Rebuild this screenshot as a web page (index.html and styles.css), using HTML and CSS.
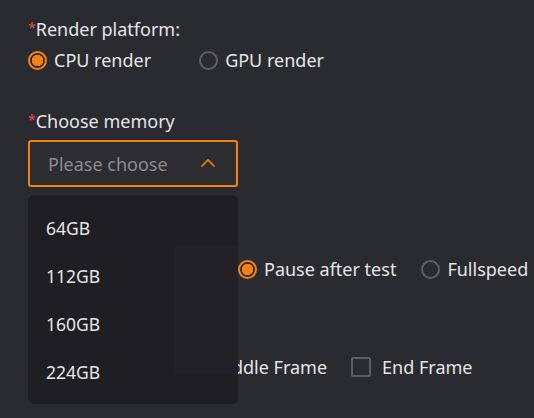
FILE: index.html
```html
<!DOCTYPE html>
<html lang="en">
<head>
  <meta charset="UTF-8" />
  <meta name="viewport" content="width=device-width, initial-scale=1.0" />
  <title>Render settings</title>
  <link rel="stylesheet" href="styles.css">
</head>
<body>
  <div class="form">
    <!-- render platform -->
    <div class="field">
      <div class="label"><span class="req">*</span>Render platform:</div>
      <div class="radios wide">
        <label class="radio checked"><span class="dot"></span>CPU render</label>
        <label class="radio"><span class="dot"></span>GPU render</label>
      </div>
    </div>

    <!-- memory select -->
    <div class="field memory">
      <div class="label"><span class="req">*</span>Choose memory</div>
      <div class="select-wrap">
        <div class="select">
          <span class="placeholder">Please choose</span>
          <svg class="arrow" width="16" height="10" viewBox="0 0 16 10">
            <path d="M1.5 8.5 L8 2 L14.5 8.5" fill="none" stroke="#f5820f" stroke-width="1.6" />
          </svg>
        </div>
        <ul class="dropdown">
          <li>64GB</li>
          <li>112GB</li>
          <li>160GB</li>
          <li>224GB</li>
          <span class="ghost"></span>
        </ul>
      </div>
    </div>

    <!-- test mode (label sits under the open dropdown) -->
    <div class="field mode">
      <div class="label spacer"></div>
      <div class="radios indent">
        <label class="radio checked"><span class="dot"></span>Pause after test</label>
        <label class="radio"><span class="dot"></span>Fullspeed</label>
      </div>
    </div>

    <div class="field frames">
      <div class="label spacer"></div>
      <div class="checks">
        <label class="check"><span class="box"></span>Middle Frame</label>
        <label class="check"><span class="box"></span>End Frame</label>
      </div>
    </div>
  </div>
</body>
</html>
```

FILE: styles.css
```css
* {
  box-sizing: border-box;
}

html, body {
  height: 100%;
}

body {
  margin: 0;
  min-height: 418px;
  background-color: #2a2a31;
  font-family: "Noto Sans", "Liberation Sans", sans-serif;
  color: #e6e6e6;
}

.form {
  padding: 16px 0 0 28px;
}

.field.memory {
  margin-top: 35px;
}

.field.mode {
  margin-top: 39px;
}

.field.frames {
  margin-top: 42px;
}

.label {
  font-size: 18px;
  line-height: 24px;
  color: #e6e6e6;
  margin-bottom: 6px;
  white-space: nowrap;
}

.label.spacer {
  height: 24px;
}

.memory .label {
  margin-bottom: 7px;
}

.req {
  color: #e5484d;
  font-size: 14px;
  vertical-align: 3px;
}

.radios {
  display: flex;
  gap: 25px;
}

.radios.wide {
  gap: 48px;
}

.radios.indent {
  padding-left: 210px;
}

.radio {
  display: flex;
  align-items: center;
  gap: 7px;
  font-size: 18px;
  line-height: 26px;
  color: #e6e6e6;
  white-space: nowrap;
}

.dot {
  width: 19px;
  height: 19px;
  border-radius: 50%;
  border: 2px solid #5e5e64;
  flex-shrink: 0;
}

.radio.checked .dot {
  border-color: #f5820f;
  background: radial-gradient(circle, #f5820f 0 5.5px, transparent 6px);
}

.select-wrap {
  position: relative;
  width: 210px;
}

.select {
  height: 47px;
  border: 2px solid #f5820f;
  border-radius: 3px;
  background-color: #2d2d31;
  display: flex;
  align-items: center;
  justify-content: space-between;
  padding: 0 20px 0 18px;
}

.placeholder {
  font-size: 18px;
  color: #8c8c8f;
}

.arrow {
  display: block;
  margin-top: -2px;
}

.dropdown {
  position: absolute;
  top: 55px;
  left: 0;
  width: 210px;
  height: 209px;
  margin: 0;
  padding: 9px 0 0;
  list-style: none;
  background-color: #1f1f23;
  border-radius: 6px;
  z-index: 5;
}

.dropdown li {
  position: relative;
  z-index: 1;
  height: 48px;
  line-height: 48px;
  padding-left: 18px;
  font-size: 17.5px;
  color: #e6e6e6;
}

.ghost {
  position: absolute;
  left: 147px;
  top: 51px;
  width: 63px;
  height: 128px;
  background-color: rgba(255, 255, 255, 0.015);
}

.checks {
  display: flex;
  gap: 24px;
  padding-left: 152px;
}

.check {
  display: flex;
  align-items: center;
  gap: 11px;
  font-size: 18px;
  line-height: 26px;
  color: #e6e6e6;
  white-space: nowrap;
}

.box {
  width: 20px;
  height: 20px;
  border: 2px solid #5e5e64;
  border-radius: 2px;
  flex-shrink: 0;
}
```
